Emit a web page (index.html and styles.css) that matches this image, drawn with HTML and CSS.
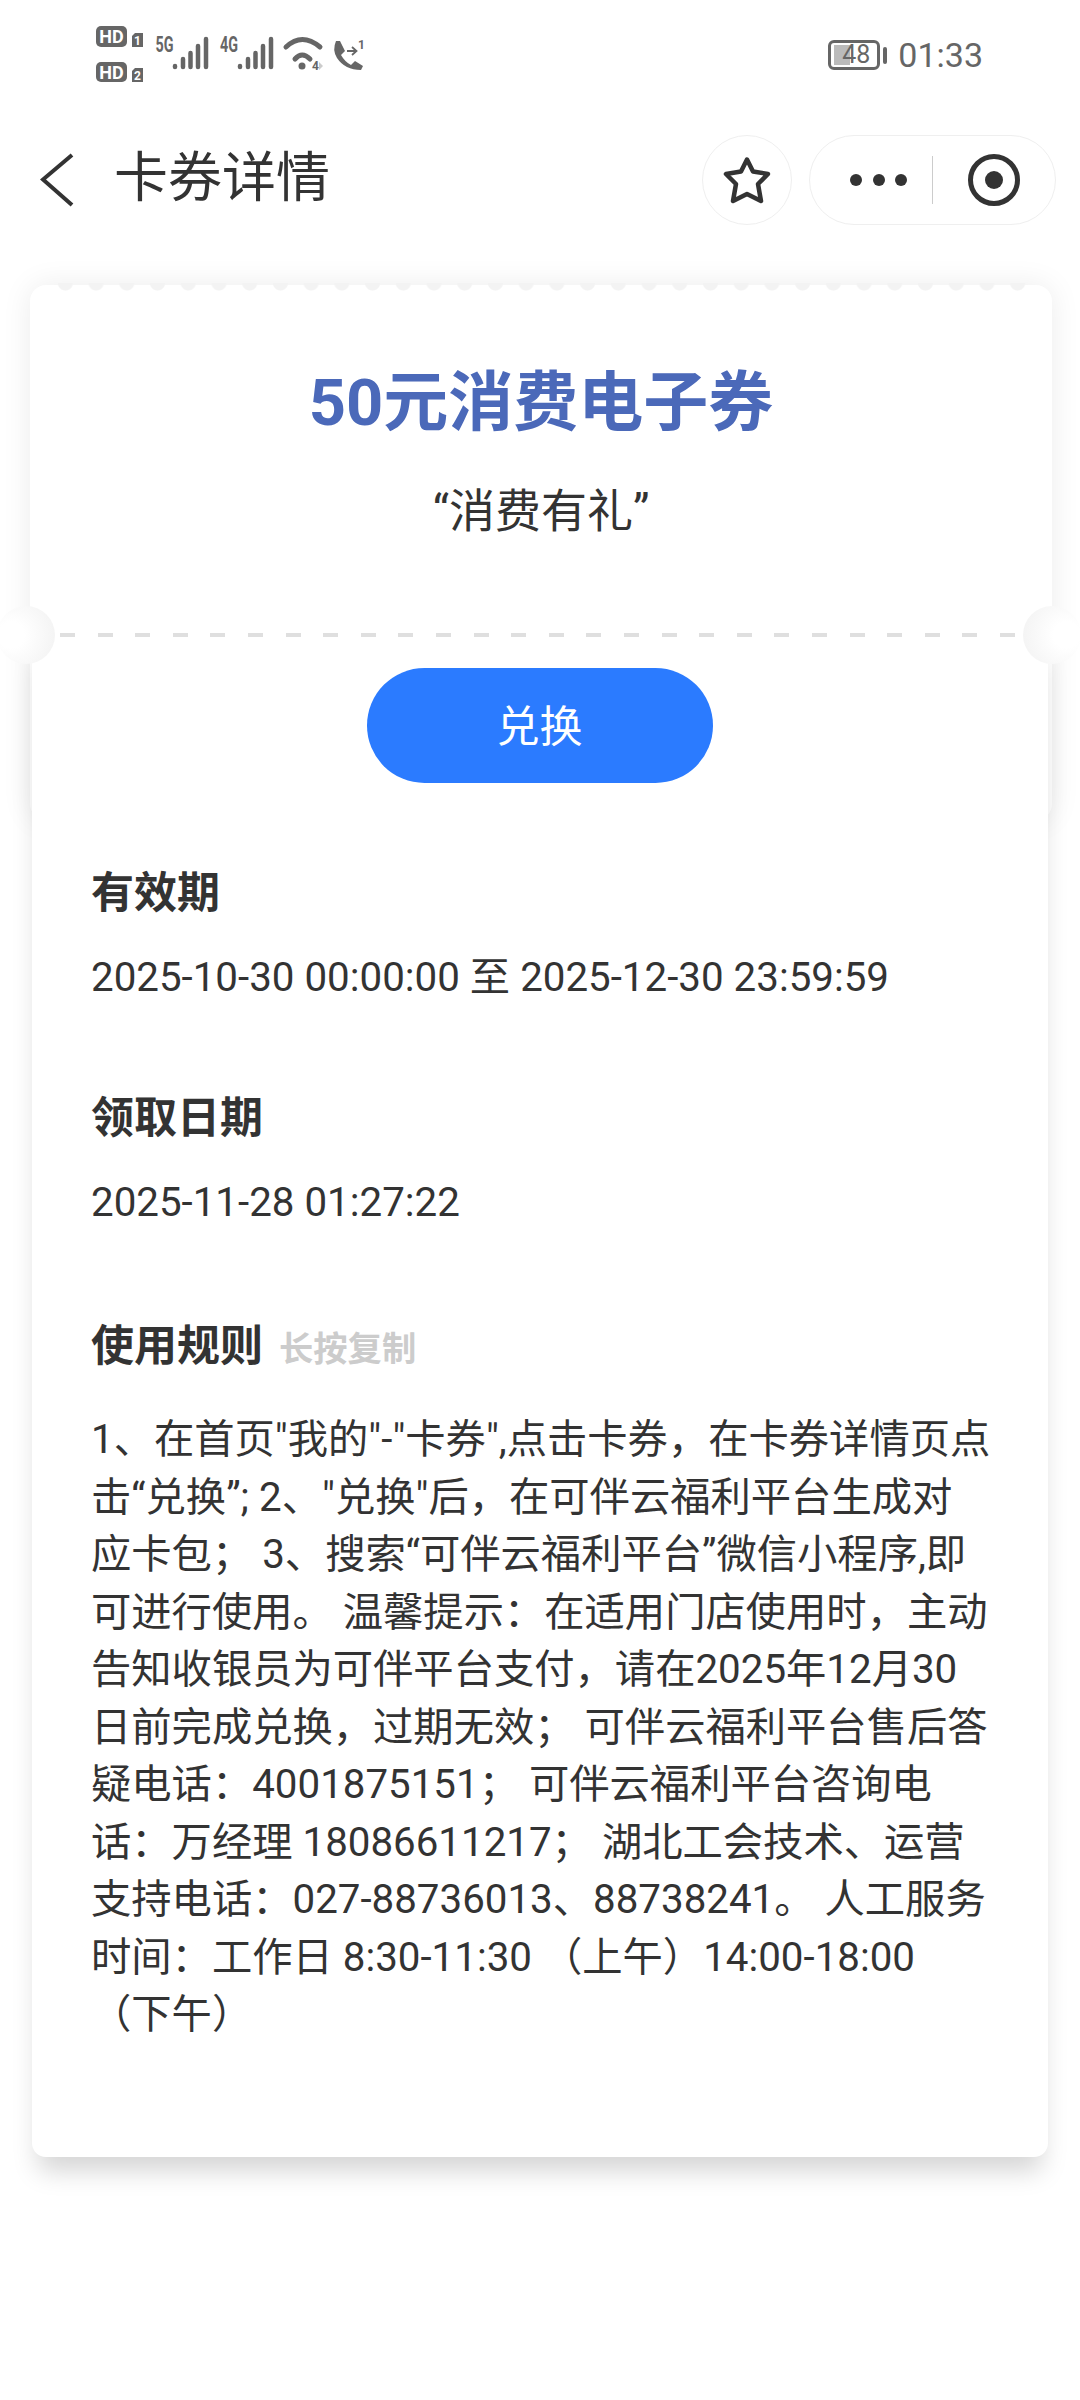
FILE: index.html
```html
<!DOCTYPE html>
<html lang="zh">
<head>
<meta charset="utf-8">
<title>卡券详情</title>
<link rel="stylesheet" href="styles.css">
</head>
<body>
<div class="status">
  <svg class="sb-icons" width="280" height="64" viewBox="90 23 280 64">
    <g fill="#666">
      <rect x="96" y="26" width="31" height="21" rx="5"/>
      <rect x="96" y="62" width="31" height="20" rx="5"/>
      <path d="M132 36 L135 33 H143 V47 H132 Z"/>
      <path d="M132 71 L135 68 H143 V82 H132 Z"/>
    </g>
    <text class="sb-hd" x="111.500" y="43" text-anchor="middle">HD</text>
    <text class="sb-hd" x="111.500" y="78.500" text-anchor="middle">HD</text>
    <text class="sb-sim" x="137.500" y="45" text-anchor="middle">1</text>
    <text class="sb-sim" x="137.500" y="80" text-anchor="middle">2</text>
    <text class="sb-net" x="155.500" y="52" textLength="18" lengthAdjust="spacingAndGlyphs">5G</text>
    <text class="sb-net" x="220" y="52" textLength="18" lengthAdjust="spacingAndGlyphs">4G</text>
    <g stroke="#666" stroke-width="4.500" stroke-linecap="round" fill="none">
      <path d="M175 67V66M183 67V59M190.500 67V53M198 67V46M206 67V39"/>
      <path d="M240 67V66M248 67V59M255.500 67V53M263 67V46M271 67V39"/>
    </g>
    <g fill="none" stroke="#666" stroke-linecap="round">
      <path d="M286 47 Q302 32 320 47" stroke-width="5"/>
      <path d="M295 59 Q302 51 310 59" stroke-width="5"/>
    </g>
    <circle cx="302" cy="66" r="3.500" fill="#666"/>
    <text class="sb-tiny" x="312" y="70">4</text>
    <path d="M319 62 L323 66 L319 70 Z" fill="#ccc"/>
    <path d="M336 41 L340 41 L345 51 L341 55 Q345 62 351 65 L355 61 L363 66 L361 70 Q345 70 337 58 Q332 50 336 41 Z" fill="#666"/>
    <path d="M347 51 H356 M352 47 L356.500 51 L352 55" fill="none" stroke="#666" stroke-width="1.800"/>
    <text class="sb-tiny" x="358" y="49">1</text>
  </svg>
  <div class="status-right">
    <div class="battery"><span class="battery-level"></span><span class="battery-num">48</span></div>
    <span class="battery-cap"></span>
    <span class="clock">01:33</span>
  </div>
</div>
<header class="nav">
  <svg class="back" width="34" height="54" viewBox="0 0 34 54"><path d="M32 2 L3 26.500 L32 52" fill="none" stroke="#333" stroke-width="4"/></svg>
  <h1 class="nav-title">卡券详情</h1>
  <div class="nav-star">
    <svg width="50" height="50" viewBox="0 0 50 50"><path d="M25 4.500 L31 16.500 L46 19 L36 29 L39 46 L25 39 L11 46 L14 29 L4 19 L19 16.500 Z" fill="none" stroke="#333" stroke-width="4.500" stroke-linejoin="round"/></svg>
  </div>
  <div class="capsule">
    <div class="dots"><i></i><i></i><i></i></div>
    <span class="capsule-sep"></span>
    <svg width="54" height="54" viewBox="0 0 54 54"><circle cx="27" cy="27" r="23.500" fill="none" stroke="#333" stroke-width="5"/><circle cx="27" cy="27" r="9" fill="#333"/></svg>
  </div>
</header>
<main class="ticket">
  <section class="ticket-head">
    <h2 class="coupon-name">50元消费电子券</h2>
    <p class="coupon-sub">“消费有礼”</p>
  </section>
  <section class="ticket-body">
    <span class="notch notch-l"></span>
    <span class="notch notch-r"></span>
    <div class="dash"></div>
    <div class="btn">兑换</div>
    <div class="block block-first">
      <h3 class="label">有效期</h3>
      <p class="value">2025-10-30 00:00:00 至 2025-12-30 23:59:59</p>
    </div>
    <div class="block">
      <h3 class="label">领取日期</h3>
      <p class="value">2025-11-28 01:27:22</p>
    </div>
    <div class="block">
      <h3 class="label">使用规则<span class="hint">长按复制</span></h3>
      <p class="rules">1、在首页"我的"-"卡券",点击卡券，在卡券详情页点<br>击“兑换”; 2、"兑换"后，在可伴云福利平台生成对<br>应卡包； 3、搜索“可伴云福利平台”微信小程序,即<br>可进行使用。 温馨提示：在适用门店使用时，主动<br>告知收银员为可伴平台支付，请在2025年12月30<br>日前完成兑换，过期无效； 可伴云福利平台售后答<br>疑电话：4001875151； 可伴云福利平台咨询电<br>话：万经理 18086611217； 湖北工会技术、运营<br>支持电话：027-88736013、88738241。 人工服务<br>时间：工作日 8:30-11:30 （上午）14:00-18:00<br>（下午）</p>
    </div>
  </section>
</main>
</body>
</html>
```
FILE: styles.css
```css
* { box-sizing: border-box; margin: 0; padding: 0; }
html, body { background: #fff; }
body { width: 1080px; height: 2400px; overflow: hidden; font-family: Roboto, "Noto Sans CJK SC", sans-serif; color: #333; }
.status { height: 110px; display: flex; justify-content: space-between; align-items: center; padding: 0 97px 0 90px; }
.sb-hd { font-size: 18px; font-weight: 700; fill: #fff; }
.sb-sim { font-size: 12px; font-weight: 700; fill: #fff; }
.sb-net { font-size: 22px; font-weight: 700; fill: #666; }
.sb-tiny { font-size: 12px; font-weight: 700; fill: #666; }
.status-right { display: flex; align-items: center; color: #666; }
.battery { position: relative; width: 52px; height: 30px; border: 3px solid #666; border-radius: 6px; display: flex; align-items: center; justify-content: center; }
.battery-level { position: absolute; left: 3px; top: 2px; bottom: 2px; width: 16px; background: #bbb; }
.battery-num { position: relative; font-size: 25px; line-height: 24px; left: 2px; }
.battery-cap { width: 4px; height: 17px; background: #666; margin: 0 11px 0 3px; border-radius: 2px; }
.clock { font-size: 34px; }
.nav { height: 90px; margin-top: 25px; display: flex; align-items: center; padding: 0 24px 0 40px; }
.nav-title { font-size: 54px; line-height: 80px; padding-bottom: 3px; font-weight: 400; margin-left: 40px; flex: 1; }
.nav-star { width: 90px; height: 90px; border: 1px solid #efefef; border-radius: 50%; display: flex; align-items: center; justify-content: center; margin-right: 17px; }
.capsule { width: 247px; height: 90px; border: 1px solid #efefef; border-radius: 45px; display: flex; align-items: center; padding-left: 40px; }
.dots { display: flex; gap: 10.500px; }
.dots i { width: 12px; height: 12px; border-radius: 50%; background: #333; }
.capsule-sep { width: 1px; height: 48px; background: #ccc; margin: 0 34px 0 25px; }
.ticket { margin-top: 60px; padding: 0 28px 0 30px; }
.ticket-head { position: relative; height: 535px; background: #fff; border-radius: 16px; box-shadow: 0 0 30px rgba(0,0,0,.08); text-align: center; padding-top: 78px; }
.ticket-head::before { content: ""; position: absolute; top: -2px; left: 20px; right: 19px; height: 10px; background: radial-gradient(circle at 15.360px 0, #f3f3f3 7px, transparent 8px) 0 0 / 30.720px 10px repeat-x; }
.coupon-name { font-size: 65px; line-height: 80px; font-weight: 700; color: #4b69b9; }
.coupon-sub { font-size: 46px; line-height: 60px; margin-top: 38px; }
.ticket-body { position: relative; margin: -185px 4px 0 2px; background: #fff; height: 1522px; border-radius: 0 0 14px 14px; box-shadow: 0 20px 26px -6px rgba(0,0,0,.17); padding: 33px 60px 0 59px; }
.notch { position: absolute; top: -29px; width: 58px; height: 58px; border-radius: 50%; }
.notch-l { left: -35px; background: radial-gradient(circle at 25% 50%, #fff 25%, #f1f1f1 100%); }
.notch-r { right: -33px; background: radial-gradient(circle at 75% 50%, #fff 25%, #f1f1f1 100%); }
.dash { position: absolute; top: -2px; left: 28px; right: 30px; height: 4px; background: repeating-linear-gradient(90deg, #dfdfdf 0 15px, transparent 15px 37.600px); }
.btn { width: 346px; height: 115px; margin: 0 auto; padding-bottom: 6px; background: #2b7bff; color: #fff; border-radius: 58px; font-size: 43px; display: flex; align-items: center; justify-content: center; }
.block { margin-top: 85px; }
.block-first { margin-top: 80px; margin-bottom: -3px; }
.label { font-size: 43px; line-height: 60px; font-weight: 700; color: #333; }
.hint { font-size: 34.300px; color: #ccc; margin-left: 16px; }
.value { font-size: 40.300px; line-height: 57px; margin-top: 26px; }
.rules { font-size: 40.300px; line-height: 57.500px; margin-top: 32px; white-space: nowrap; }
```
